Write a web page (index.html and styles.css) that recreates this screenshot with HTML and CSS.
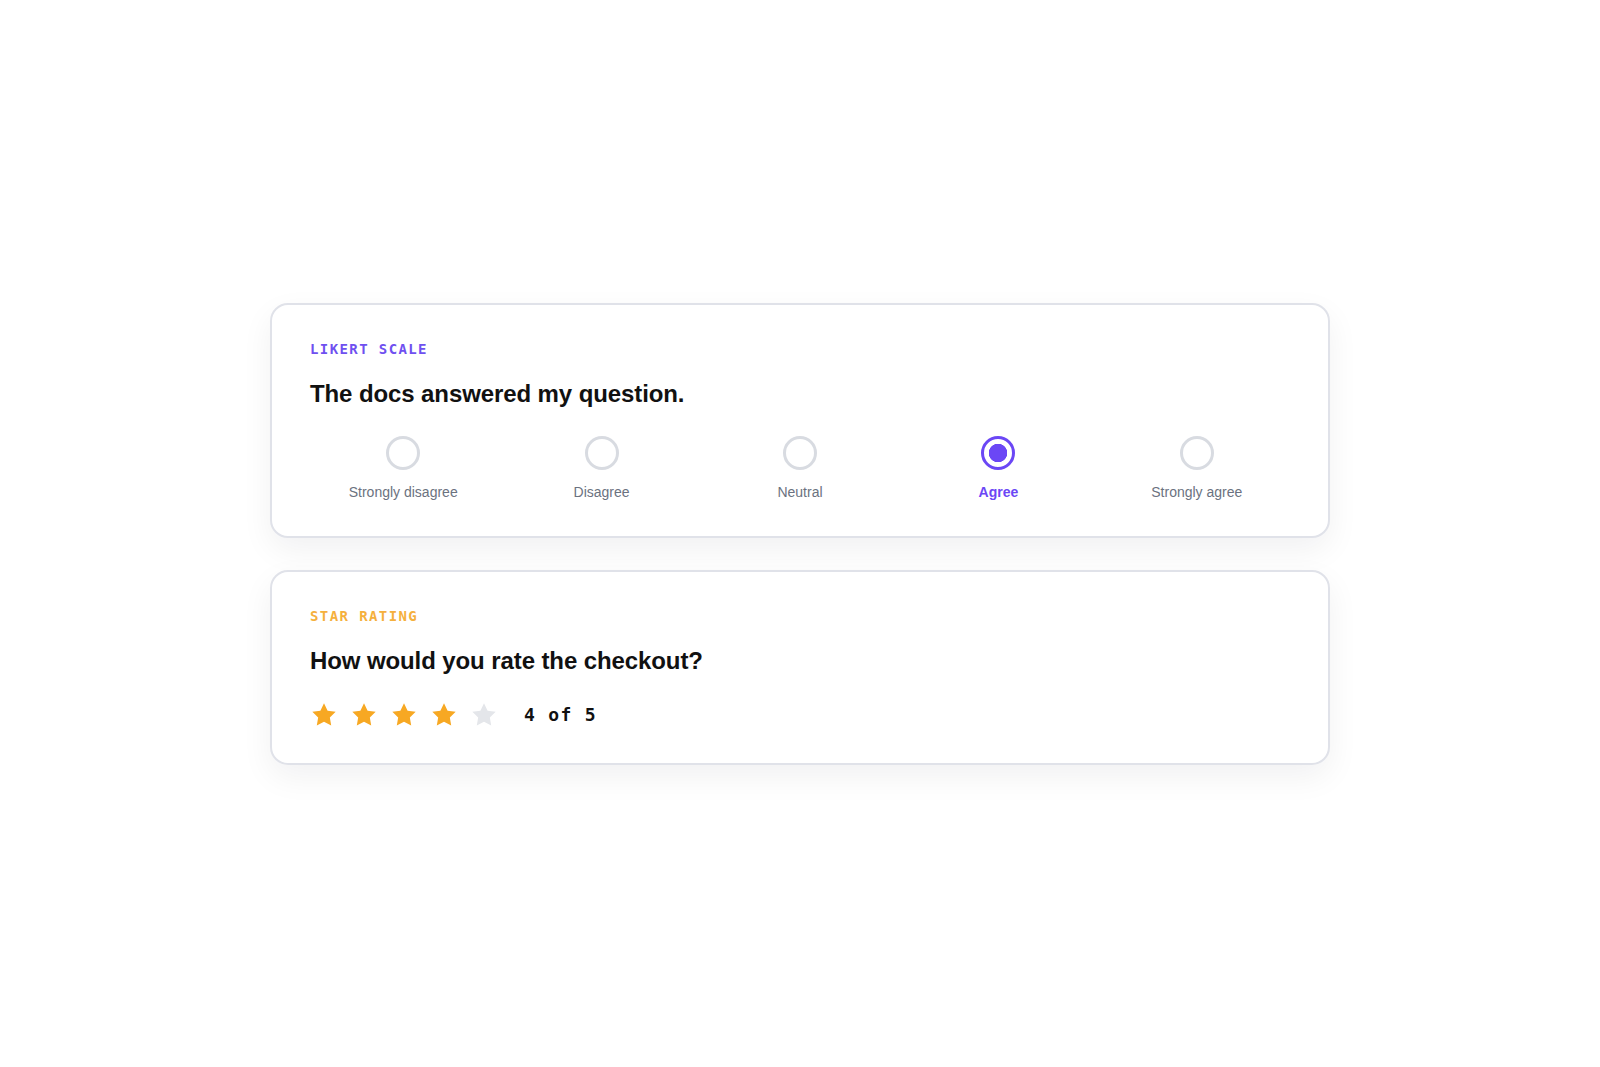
FILE: index.html
```html
<!DOCTYPE html>
<html lang="en">
<head>
  <meta charset="UTF-8">
  <meta name="viewport" content="width=device-width, initial-scale=1.0">
  <title>Feedback Widgets</title>
  <link rel="stylesheet" href="styles.css">
</head>
<body>
  <main class="stack">
    <section class="card">
      <p class="kicker kicker-likert">LIKERT SCALE</p>
      <h2 class="question">The docs answered my question.</h2>
      <div class="likert">
        <label class="choice">
          <span class="dot"></span>
          <span class="choice-label">Strongly disagree</span>
        </label>
        <label class="choice">
          <span class="dot"></span>
          <span class="choice-label">Disagree</span>
        </label>
        <label class="choice">
          <span class="dot"></span>
          <span class="choice-label">Neutral</span>
        </label>
        <label class="choice selected">
          <span class="dot"></span>
          <span class="choice-label">Agree</span>
        </label>
        <label class="choice">
          <span class="dot"></span>
          <span class="choice-label">Strongly agree</span>
        </label>
      </div>
    </section>

    <section class="card">
      <p class="kicker kicker-stars">STAR RATING</p>
      <h2 class="question">How would you rate the checkout?</h2>
      <div class="stars">
        <svg class="star on" viewBox="0 0 24 24"><path d="M12 2l3.09 6.26L22 9.27l-5 4.87 1.18 6.88L12 17.77l-6.18 3.25L7 14.14 2 9.27l6.91-1.01L12 2z"/></svg>
        <svg class="star on" viewBox="0 0 24 24"><path d="M12 2l3.09 6.26L22 9.27l-5 4.87 1.18 6.88L12 17.77l-6.18 3.25L7 14.14 2 9.27l6.91-1.01L12 2z"/></svg>
        <svg class="star on" viewBox="0 0 24 24"><path d="M12 2l3.09 6.26L22 9.27l-5 4.87 1.18 6.88L12 17.77l-6.18 3.25L7 14.14 2 9.27l6.91-1.01L12 2z"/></svg>
        <svg class="star on" viewBox="0 0 24 24"><path d="M12 2l3.09 6.26L22 9.27l-5 4.87 1.18 6.88L12 17.77l-6.18 3.25L7 14.14 2 9.27l6.91-1.01L12 2z"/></svg>
        <svg class="star" viewBox="0 0 24 24"><path d="M12 2l3.09 6.26L22 9.27l-5 4.87 1.18 6.88L12 17.77l-6.18 3.25L7 14.14 2 9.27l6.91-1.01L12 2z"/></svg>
        <span class="score">4 of 5</span>
      </div>
    </section>
  </main>
</body>
</html>
```

FILE: styles.css
```css
body {
  font-family: "Liberation Sans", Arial, sans-serif;
  display: flex;
  justify-content: center;
  align-items: center;
  min-height: 100vh;
  margin: 0;
  background-color: #fff;
  color: #111;
}
.stack {
  display: flex;
  flex-direction: column;
  gap: 32px;
  width: 1060px;
}
.card {
  box-sizing: border-box;
  background: #fff;
  border: 2px solid #e0e2e9;
  border-radius: 18px;
  padding: 34px 38px 34px;
  box-shadow: 0 12px 32px rgba(20, 24, 40, 0.06);
}
.kicker {
  margin: 0;
  font-family: "DejaVu Sans Mono", monospace;
  font-size: 14px;
  font-weight: 700;
  line-height: 20px;
  letter-spacing: 1.4px;
}
.kicker-likert {
  color: #6f50f0;
}
.kicker-stars {
  color: #f5b03d;
}
.question {
  margin: 19px 0 0;
  font-size: 24px;
  line-height: 32px;
  font-weight: 700;
  letter-spacing: -0.1px;
  color: #111;
}

/* five point agreement scale */
.likert {
  display: grid;
  grid-template-columns: repeat(5, 1fr);
  gap: 12px;
  margin-top: 26px;
}
.choice {
  display: flex;
  flex-direction: column;
  align-items: center;
  gap: 12px;
  cursor: pointer;
}
.dot {
  box-sizing: border-box;
  width: 34px;
  height: 34px;
  border: 3px solid #d8dbe1;
  border-radius: 50%;
  background: #fff;
}
.choice-label {
  font-size: 14px;
  line-height: 20px;
  color: #6b7280;
}
.choice.selected .dot {
  border-color: #6b47f5;
  background: radial-gradient(circle, #6b47f5 0 9px, #fff 9.5px);
}
.choice.selected .choice-label {
  color: #6b47f5;
  font-weight: 700;
}

/* star rating row */
.stars {
  display: flex;
  align-items: center;
  gap: 12px;
  margin-top: 24px;
}
.star {
  width: 28px;
  height: 28px;
  fill: #e4e6ea;
}
.star.on {
  fill: #f7a823;
}
.score {
  margin-left: 14px;
  font-family: "DejaVu Sans Mono", monospace;
  font-size: 18px;
  font-weight: 700;
  letter-spacing: 1.3px;
  color: #111;
}
```
